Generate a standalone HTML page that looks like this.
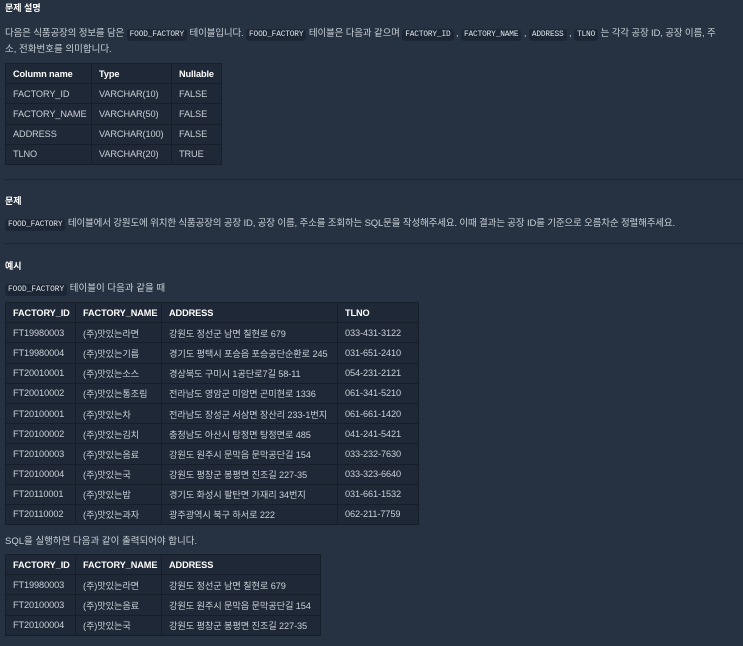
<!DOCTYPE html>
<html><head><meta charset="utf-8"><style>
*{margin:0;padding:0;box-sizing:border-box}
body{width:743px;height:646px;overflow:hidden;background:#263241;color:#c9d0d8;font-family:"Liberation Sans","Noto Sans CJK KR",sans-serif;font-size:9.5px;position:relative}
.a{position:absolute;white-space:nowrap}
h{font-weight:bold;color:#fff;font-size:9px}
code{font-family:"Liberation Mono","Noto Sans CJK KR",monospace;font-size:7.8px;background:#1d2634;color:#dfe4ea;padding:2px 3px;border-radius:3px}
table{position:absolute;border-collapse:collapse;background:#1f2836;left:5px;table-layout:fixed}
td,th{border:1px solid #161e29;height:20.2px;padding:0 6px 0 7px;text-align:left;font-weight:normal;white-space:nowrap;overflow:hidden;font-size:9.2px;color:#c9d0d8;letter-spacing:-0.1px}
th{color:#fff;font-weight:bold}
.hr{position:absolute;left:5px;right:0;height:1px;background:#1b2430}
</style></head><body>
<div class="a" style="left:5px;top:1px"><h>문제 설명</h></div>
<div class="a" style="left:5px;top:25px;letter-spacing:-0.15px">다음은 식품공장의 정보를 담은 <code>FOOD_FACTORY</code> 테이블입니다. <code>FOOD_FACTORY</code> 테이블은 다음과 같으며 <code>FACTORY_ID</code> , <code>FACTORY_NAME</code> , <code>ADDRESS</code> , <code>TLNO</code> 는 각각 공장 ID, 공장 이름, 주</div>
<div class="a" style="left:5px;top:41px">소, 전화번호를 의미합니다.</div>
<table style="top:63px;width:216px">
<col style="width:86px"><col style="width:80px"><col style="width:50px">
<tr><th>Column name</th><th>Type</th><th>Nullable</th></tr>
<tr><td>FACTORY_ID</td><td>VARCHAR(10)</td><td>FALSE</td></tr>
<tr><td>FACTORY_NAME</td><td>VARCHAR(50)</td><td>FALSE</td></tr>
<tr><td>ADDRESS</td><td>VARCHAR(100)</td><td>FALSE</td></tr>
<tr><td>TLNO</td><td>VARCHAR(20)</td><td>TRUE</td></tr>
</table>
<div class="hr" style="top:179px"></div>
<div class="a" style="left:5px;top:194px"><h>문제</h></div>
<div class="a" style="left:5px;top:215px;letter-spacing:-0.15px"><code>FOOD_FACTORY</code> 테이블에서 강원도에 위치한 식품공장의 공장 ID, 공장 이름, 주소를 조회하는 SQL문을 작성해주세요. 이때 결과는 공장 ID를 기준으로 오름차순 정렬해주세요.</div>
<div class="hr" style="top:243px"></div>
<div class="a" style="left:5px;top:259px"><h>예시</h></div>
<div class="a" style="left:5px;top:280px"><code>FOOD_FACTORY</code> 테이블이 다음과 같을 때</div>
<table style="top:302px;width:413px">
<col style="width:70px"><col style="width:86px"><col style="width:176px"><col style="width:81px">
<tr><th>FACTORY_ID</th><th>FACTORY_NAME</th><th>ADDRESS</th><th>TLNO</th></tr>
<tr><td>FT19980003</td><td>(주)맛있는라면</td><td>강원도 정선군 남면 칠현로 679</td><td>033-431-3122</td></tr>
<tr><td>FT19980004</td><td>(주)맛있는기름</td><td>경기도 평택시 포승읍 포승공단순환로 245</td><td>031-651-2410</td></tr>
<tr><td>FT20010001</td><td>(주)맛있는소스</td><td>경상북도 구미시 1공단로7길 58-11</td><td>054-231-2121</td></tr>
<tr><td>FT20010002</td><td>(주)맛있는통조림</td><td>전라남도 영암군 미암면 곤미현로 1336</td><td>061-341-5210</td></tr>
<tr><td>FT20100001</td><td>(주)맛있는차</td><td>전라남도 장성군 서삼면 장산리 233-1번지</td><td>061-661-1420</td></tr>
<tr><td>FT20100002</td><td>(주)맛있는김치</td><td>충청남도 아산시 탕정면 탕정면로 485</td><td>041-241-5421</td></tr>
<tr><td>FT20100003</td><td>(주)맛있는음료</td><td>강원도 원주시 문막읍 문막공단길 154</td><td>033-232-7630</td></tr>
<tr><td>FT20100004</td><td>(주)맛있는국</td><td>강원도 평창군 봉평면 진조길 227-35</td><td>033-323-6640</td></tr>
<tr><td>FT20110001</td><td>(주)맛있는밥</td><td>경기도 화성시 팔탄면 가재리 34번지</td><td>031-661-1532</td></tr>
<tr><td>FT20110002</td><td>(주)맛있는과자</td><td>광주광역시 북구 하서로 222</td><td>062-211-7759</td></tr>
</table>
<div class="a" style="left:5px;top:533px">SQL을 실행하면 다음과 같이 출력되어야 합니다.</div>
<table style="top:554px;width:315px">
<col style="width:70px"><col style="width:86px"><col style="width:159px">
<tr><th>FACTORY_ID</th><th>FACTORY_NAME</th><th>ADDRESS</th></tr>
<tr><td>FT19980003</td><td>(주)맛있는라면</td><td>강원도 정선군 남면 칠현로 679</td></tr>
<tr><td>FT20100003</td><td>(주)맛있는음료</td><td>강원도 원주시 문막읍 문막공단길 154</td></tr>
<tr><td>FT20100004</td><td>(주)맛있는국</td><td>강원도 평창군 봉평면 진조길 227-35</td></tr>
</table>
</body></html>
